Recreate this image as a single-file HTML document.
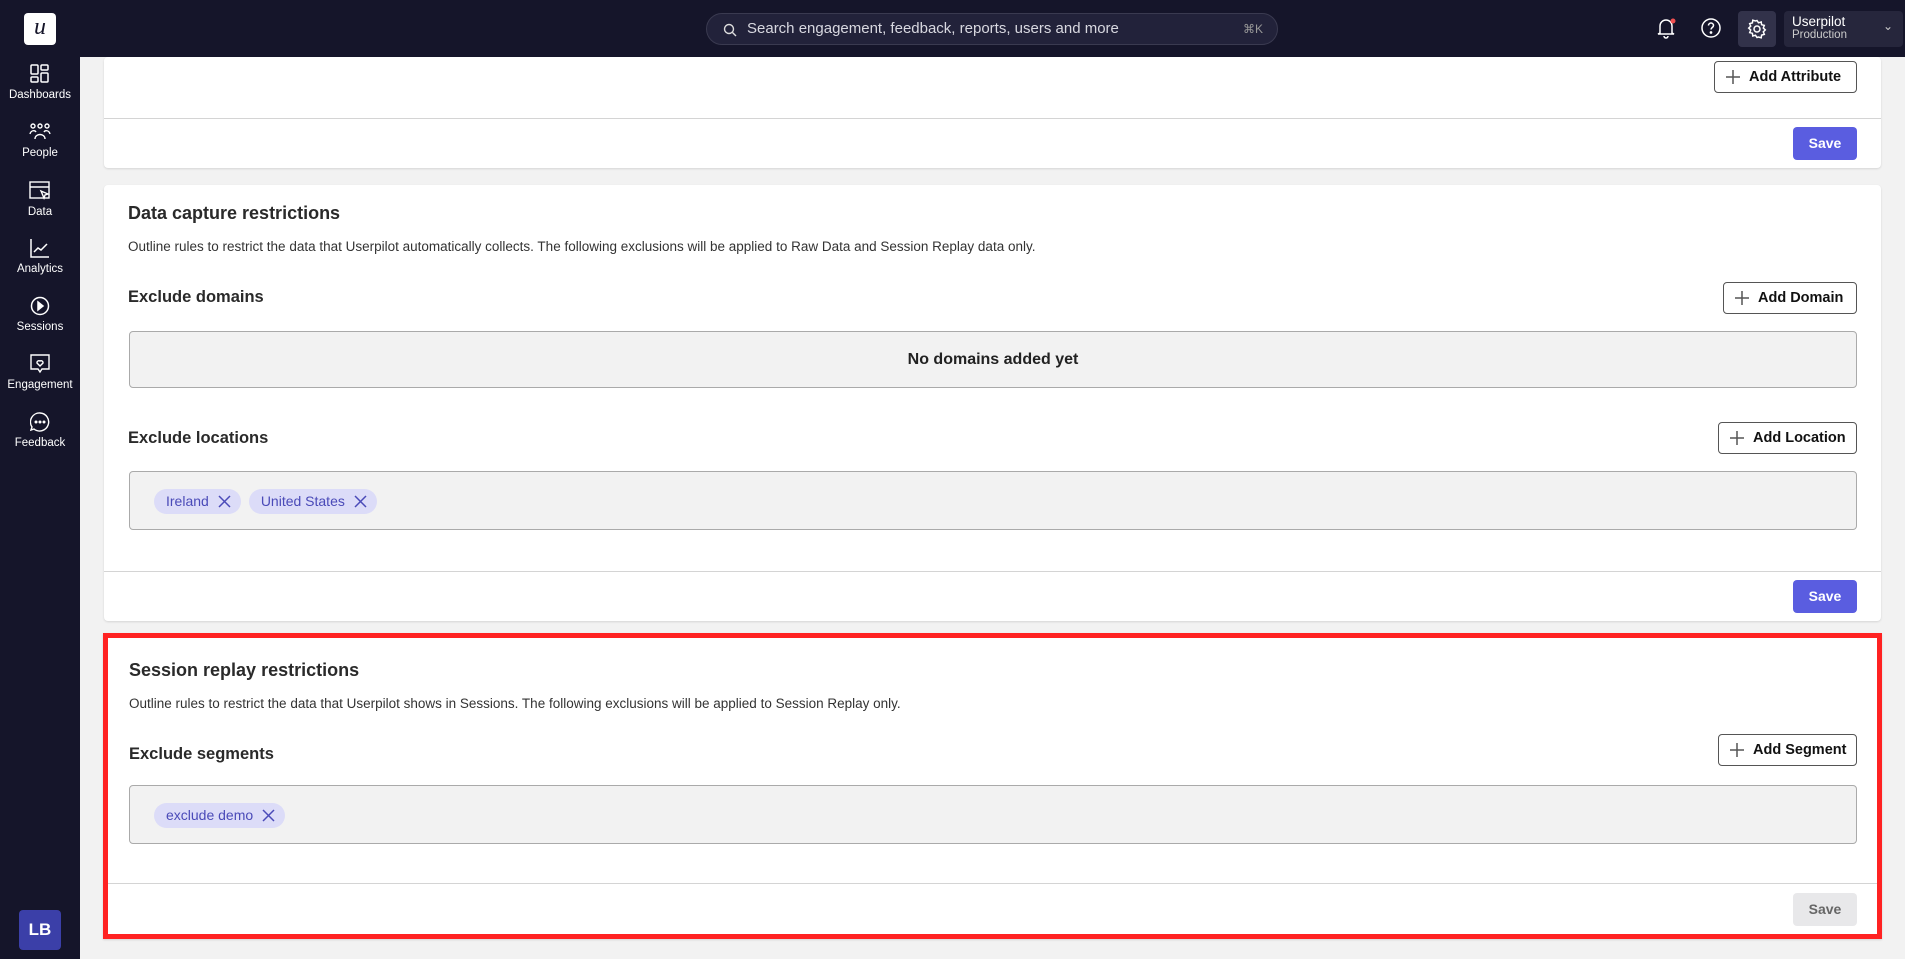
<!DOCTYPE html>
<html><head><meta charset="utf-8"><style>
*{box-sizing:border-box;margin:0;padding:0}
body{width:1905px;height:959px;overflow:hidden;background:#f2f2f2;font-family:"Liberation Sans",sans-serif;position:relative;color:#222}
.top{position:absolute;left:0;top:0;width:1905px;height:57px;background:#15152a}
.side{position:absolute;left:0;top:0;width:80px;height:959px;background:#15152a}
.logo{position:absolute;left:24px;top:13px;width:32px;height:32px;background:#fff;border-radius:4px;font-family:"Liberation Serif",serif;font-style:italic;font-size:24px;text-align:center;line-height:28px;color:#15152a}
.nav{position:absolute;left:0;width:80px;text-align:center;color:#fff;font-size:11.5px}
.nav svg{display:block;margin:0 auto 5px}
.search{position:absolute;left:706px;top:13px;width:572px;height:32px;border:1px solid #3a3a50;background:#22223a;border-radius:16px;color:#d8d8e0;font-size:15px;line-height:30px;padding-left:40px}
.search .k{position:absolute;right:14px;top:0;font-size:12px;color:#999}
.card{position:absolute;left:104px;width:1777px;background:#fff;border-radius:4px;box-shadow:0 1px 2px rgba(0,0,0,.12)}
.abs{position:absolute}
.h1{font-size:18px;font-weight:bold;color:#2a2a2a}
.d{font-size:13.5px;color:#333}
.h2{font-size:16.5px;font-weight:bold;color:#2a2a2a}
.btn{position:absolute;height:32px;border:1px solid #555;border-radius:4px;background:#fff;font-weight:bold;font-size:14.5px;line-height:30px;padding-left:34px;color:#111}
.btn svg{position:absolute;left:11px;top:8px}
.save{position:absolute;width:64px;height:33px;border-radius:4px;background:#5a5de0;color:#fff;font-weight:bold;font-size:14px;text-align:center;line-height:33px}
.box{position:absolute;left:25px;width:1728px;background:#f2f2f2;border:1px solid #aaa;border-radius:4px}
.chip{display:inline-block;height:25px;border-radius:13px;background:#dcdcf8;color:#4a4ab8;font-size:14px;line-height:25px;padding:0 32px 0 12px;position:relative;margin-right:8px}
.chip svg{position:absolute;right:10px;top:6px}
.hr{position:absolute;left:0;width:100%;height:1px;background:#d4d4d4}
</style></head><body>
<div class="top"></div>
<div class="side"></div>
<div class="logo">u</div>
<div class="nav" style="top:64px"><svg width="20" height="20" viewBox="0 0 20 20" fill="none" stroke="#fff" stroke-width="1.5"><rect x="1" y="1" width="7" height="9" rx="1"/><rect x="1" y="13" width="7" height="5" rx="1"/><rect x="11" y="1" width="7" height="5" rx="1"/><rect x="11" y="9" width="7" height="9" rx="1"/></svg>Dashboards</div>
<div class="nav" style="top:122px"><svg width="22" height="20" viewBox="0 0 22 20" fill="none" stroke="#fff" stroke-width="1.4"><circle cx="4" cy="4" r="2"/><circle cx="11" cy="4" r="2"/><circle cx="18" cy="4" r="2"/><path d="M1 12c1-4 5-4 6-2M21 12c-1-4-5-4-6-2M6 17c0-6 10-6 10 0"/></svg>People</div>
<div class="nav" style="top:181px"><svg width="22" height="20" viewBox="0 0 22 20" fill="none" stroke="#fff" stroke-width="1.4"><rect x="1" y="1" width="19" height="16"/><path d="M1 6h19M12 10l7 3-3 1-1 3z"/></svg>Data</div>
<div class="nav" style="top:238px"><svg width="20" height="20" viewBox="0 0 20 20" fill="none" stroke="#fff" stroke-width="1.5"><path d="M1 1v18h18M4 14l4-4 3 2 6-6"/></svg>Analytics</div>
<div class="nav" style="top:296px"><svg width="20" height="20" viewBox="0 0 20 20" fill="none" stroke="#fff" stroke-width="1.5"><circle cx="10" cy="10" r="8.5"/><path d="M8 6l5 4-5 4z" fill="#fff"/></svg>Sessions</div>
<div class="nav" style="top:354px"><svg width="20" height="20" viewBox="0 0 20 20" fill="none" stroke="#fff" stroke-width="1.4"><path d="M1 1h18v14h-7l-2 3-2-3H1z"/><path d="M10 12l-3-3a2 2 0 013-2 2 2 0 013 2z"/></svg>Engagement</div>
<div class="nav" style="top:412px"><svg width="20" height="20" viewBox="0 0 20 20" fill="none" stroke="#fff" stroke-width="1.4"><path d="M10 1a9 9 0 11-6 16l-3 1 1-3A9 9 0 0110 1z"/><circle cx="6" cy="10" r=".8" fill="#fff"/><circle cx="10" cy="10" r=".8" fill="#fff"/><circle cx="14" cy="10" r=".8" fill="#fff"/></svg>Feedback</div>
<div class="abs" style="left:19px;top:910px;width:42px;height:40px;background:#3b3fa8;border-radius:4px;color:#fff;font-weight:bold;font-size:17px;text-align:center;line-height:40px">LB</div>
<div class="search"><svg class="abs" style="left:16px;top:9px" width="14" height="14" viewBox="0 0 14 14" fill="none" stroke="#ddd" stroke-width="1.4"><circle cx="6" cy="6" r="4.5"/><path d="M9.5 9.5L13 13"/></svg>Search engagement, feedback, reports, users and more<span class="k">⌘K</span></div>
<svg class="abs" style="left:1655px;top:17px" width="22" height="22" viewBox="0 0 22 22" fill="none" stroke="#fff" stroke-width="1.5"><path d="M5 16V9a6 6 0 0112 0v7l2 1H3zM9 19a2 2 0 004 0"/><circle cx="18" cy="4" r="2.5" fill="#f05050" stroke="none"/></svg>
<svg class="abs" style="left:1700px;top:17px" width="22" height="22" viewBox="0 0 22 22" fill="none" stroke="#fff" stroke-width="1.5"><circle cx="11" cy="11" r="9"/><path d="M8.5 8.5a2.5 2.5 0 115 0c0 2-2.5 2-2.5 4"/><circle cx="11" cy="15.5" r=".6" fill="#fff"/></svg>
<div class="abs" style="left:1738px;top:11px;width:38px;height:36px;background:#32324a;border-radius:4px"><svg class="abs" style="left:9px;top:8px" width="20" height="20" viewBox="0 0 20 20" fill="none" stroke="#fff" stroke-width="1.5"><circle cx="10" cy="10" r="3"/><path d="M10 1.5l1.5 2.3 2.7-.8.4 2.7 2.7.7-1 2.6 2 1.9-2 1.9 1 2.6-2.7.7-.4 2.7-2.7-.8L10 18.5l-1.5-2.3-2.7.8-.4-2.7-2.7-.7 1-2.6-2-1.9 2-1.9-1-2.6 2.7-.7.4-2.7 2.7.8z"/></svg></div>
<div class="abs" style="left:1784px;top:11px;width:119px;height:36px;background:#26263c;border-radius:4px;color:#fff;padding:3px 0 0 8px"><div style="font-size:13.5px">Userpilot</div><div style="font-size:11.5px;color:#ccc">Production</div><div class="abs" style="right:10px;top:8px;font-size:12px;color:#ccc">⌄</div></div>

<div class="card" style="top:57px;height:111px">
<div class="btn" style="left:1610px;top:4px;width:143px"><svg width="14" height="14" viewBox="0 0 14 14" stroke="#555" stroke-width="1.5"><path d="M7 0v14M0 7h14"/></svg>Add Attribute</div>
<div class="hr" style="top:61px"></div>
<div class="save" style="left:1689px;top:70px">Save</div>
</div>

<div class="card" style="top:185px;height:436px">
<div class="abs h1" style="left:24px;top:18px">Data capture restrictions</div>
<div class="abs d" style="left:24px;top:54px">Outline rules to restrict the data that Userpilot automatically collects. The following exclusions will be applied to Raw Data and Session Replay data only.</div>
<div class="abs h2" style="left:24px;top:103px">Exclude domains</div>
<div class="btn" style="left:1619px;top:97px;width:134px"><svg width="14" height="14" viewBox="0 0 14 14" stroke="#555" stroke-width="1.5"><path d="M7 0v14M0 7h14"/></svg>Add Domain</div>
<div class="box" style="top:146px;height:57px;text-align:center;font-weight:bold;font-size:16px;line-height:55px;color:#222">No domains added yet</div>
<div class="abs h2" style="left:24px;top:244px">Exclude locations</div>
<div class="btn" style="left:1614px;top:237px;width:139px"><svg width="14" height="14" viewBox="0 0 14 14" stroke="#555" stroke-width="1.5"><path d="M7 0v14M0 7h14"/></svg>Add Location</div>
<div class="box" style="top:286px;height:59px;padding:17px 0 0 24px"><span class="chip">Ireland<svg width="13" height="13" viewBox="0 0 13 13" stroke="#4a4ab8" stroke-width="1.5"><path d="M1 1l11 11M12 1L1 12"/></svg></span><span class="chip">United States<svg width="13" height="13" viewBox="0 0 13 13" stroke="#4a4ab8" stroke-width="1.5"><path d="M1 1l11 11M12 1L1 12"/></svg></span></div>
<div class="hr" style="top:386px"></div>
<div class="save" style="left:1689px;top:395px">Save</div>
</div>

<div class="card" style="top:633px;height:306px;border:5px solid #ff2222;border-radius:0;left:103px;width:1779px">
<div class="abs h1" style="left:21px;top:22px">Session replay restrictions</div>
<div class="abs d" style="left:21px;top:58px">Outline rules to restrict the data that Userpilot shows in Sessions. The following exclusions will be applied to Session Replay only.</div>
<div class="abs h2" style="left:21px;top:107px">Exclude segments</div>
<div class="btn" style="left:1610px;top:96px;width:139px"><svg width="14" height="14" viewBox="0 0 14 14" stroke="#555" stroke-width="1.5"><path d="M7 0v14M0 7h14"/></svg>Add Segment</div>
<div class="box" style="left:21px;top:147px;height:59px;width:1728px;padding:17px 0 0 24px"><span class="chip">exclude demo<svg width="13" height="13" viewBox="0 0 13 13" stroke="#4a4ab8" stroke-width="1.5"><path d="M1 1l11 11M12 1L1 12"/></svg></span></div>
<div class="hr" style="top:245px"></div>
<div class="save" style="left:1685px;top:255px;background:#e8e8ea;color:#666">Save</div>
</div>
</body></html>
